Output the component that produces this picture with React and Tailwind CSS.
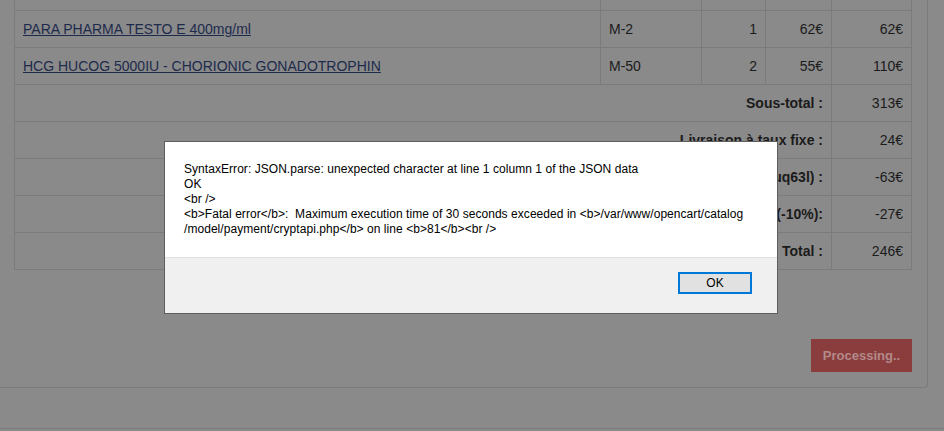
import React from "react";

const B = "border-[#7b7b7b]";

function Row({ children, h = "h-[37px]" }) {
  return <div className={`flex ${h} border-b ${B}`}>{children}</div>;
}

export default function App() {
  const cell = "pt-[8px] px-[8px] leading-[20px] text-[14px] text-[#1b1b1b]";
  const products = [
    { name: "PARA PHARMA TESTO E 400mg/ml", model: "M-2", qty: "1", price: "62€", total: "62€" },
    { name: "HCG HUCOG 5000IU - CHORIONIC GONADOTROPHIN", model: "M-50", qty: "2", price: "55€", total: "110€" },
  ];
  const totals = [
    ["Sous-total :", "313€"],
    ["Livraison à taux fixe :", "24€"],
    ["Coupon (ruq63l) :", "-63€"],
    ["Remise (-10%):", "-27€"],
    ["Total :", "246€"],
  ];
  return (
    <div className="relative w-[944px] h-[431px] overflow-hidden bg-[#8a8a8a] font-['Liberation_Sans',Arial,sans-serif]">
      <div className={`w-[928px] h-[388px] border-r border-b ${B} rounded-br-[4px] pl-[14px] pr-[15px] flex flex-col`}>
        <div className={`w-[898px] border-x ${B}`}>
          <Row h="h-[11px]">
            <div className="w-[585px]" />
            <div className={`w-[101px] border-l ${B}`} />
            <div className={`w-[64px] border-l ${B}`} />
            <div className={`w-[66px] border-l ${B}`} />
            <div className={`w-[80px] border-l ${B}`} />
          </Row>
          {products.map((p) => (
            <Row key={p.name}>
              <div className={`w-[585px] ${cell}`}>
                <span className="underline text-[#1d2a4c]">{p.name}</span>
              </div>
              <div className={`w-[101px] border-l ${B} ${cell}`}>{p.model}</div>
              <div className={`w-[64px] border-l ${B} ${cell} text-right`}>{p.qty}</div>
              <div className={`w-[66px] border-l ${B} ${cell} text-right`}>{p.price}</div>
              <div className={`w-[80px] border-l ${B} ${cell} text-right`}>{p.total}</div>
            </Row>
          ))}
          {totals.map(([l, v]) => (
            <div key={l} className={`flex h-[37px] border-b ${B}`}>
              <div className={`w-[816px] ${cell} text-right font-bold`}>{l}</div>
              <div className={`w-[80px] border-l ${B} ${cell} text-right`}>{v}</div>
            </div>
          ))}
        </div>
        <div className="mt-[69px] flex justify-end">
          <div className="w-[101px] h-[33px] bg-[#8b3d3d] text-[#b38a8a] font-bold text-[13px] flex items-center justify-center">
            Processing..
          </div>
        </div>
      </div>
      <div className={`mt-[40px] border-t ${B}`} />

      <div className="absolute left-[164px] top-[141px] w-[614px] h-[173px] border border-[#5e5e5e] bg-white flex flex-col">
        <div className="h-[115px] pt-[20px] pl-[19px] text-[12px] leading-[15px] tracking-[0.05px] text-black whitespace-pre">
          {"SyntaxError: JSON.parse: unexpected character at line 1 column 1 of the JSON data\nOK\n<br />\n<b>Fatal error</b>:  Maximum execution time of 30 seconds exceeded in <b>/var/www/opencart/catalog\n/model/payment/cryptapi.php</b> on line <b>81</b><br />"}
        </div>
        <div className="flex-1 border-t border-[#dfdfdf] bg-[#f0f0f0] flex justify-end items-start pt-[14px] pr-[25px]">
          <div className="w-[74px] h-[22px] border-2 border-[#0078d7] bg-[#e1e1e1] text-[12px] text-black flex items-center justify-center">
            OK
          </div>
        </div>
      </div>
    </div>
  );
}
